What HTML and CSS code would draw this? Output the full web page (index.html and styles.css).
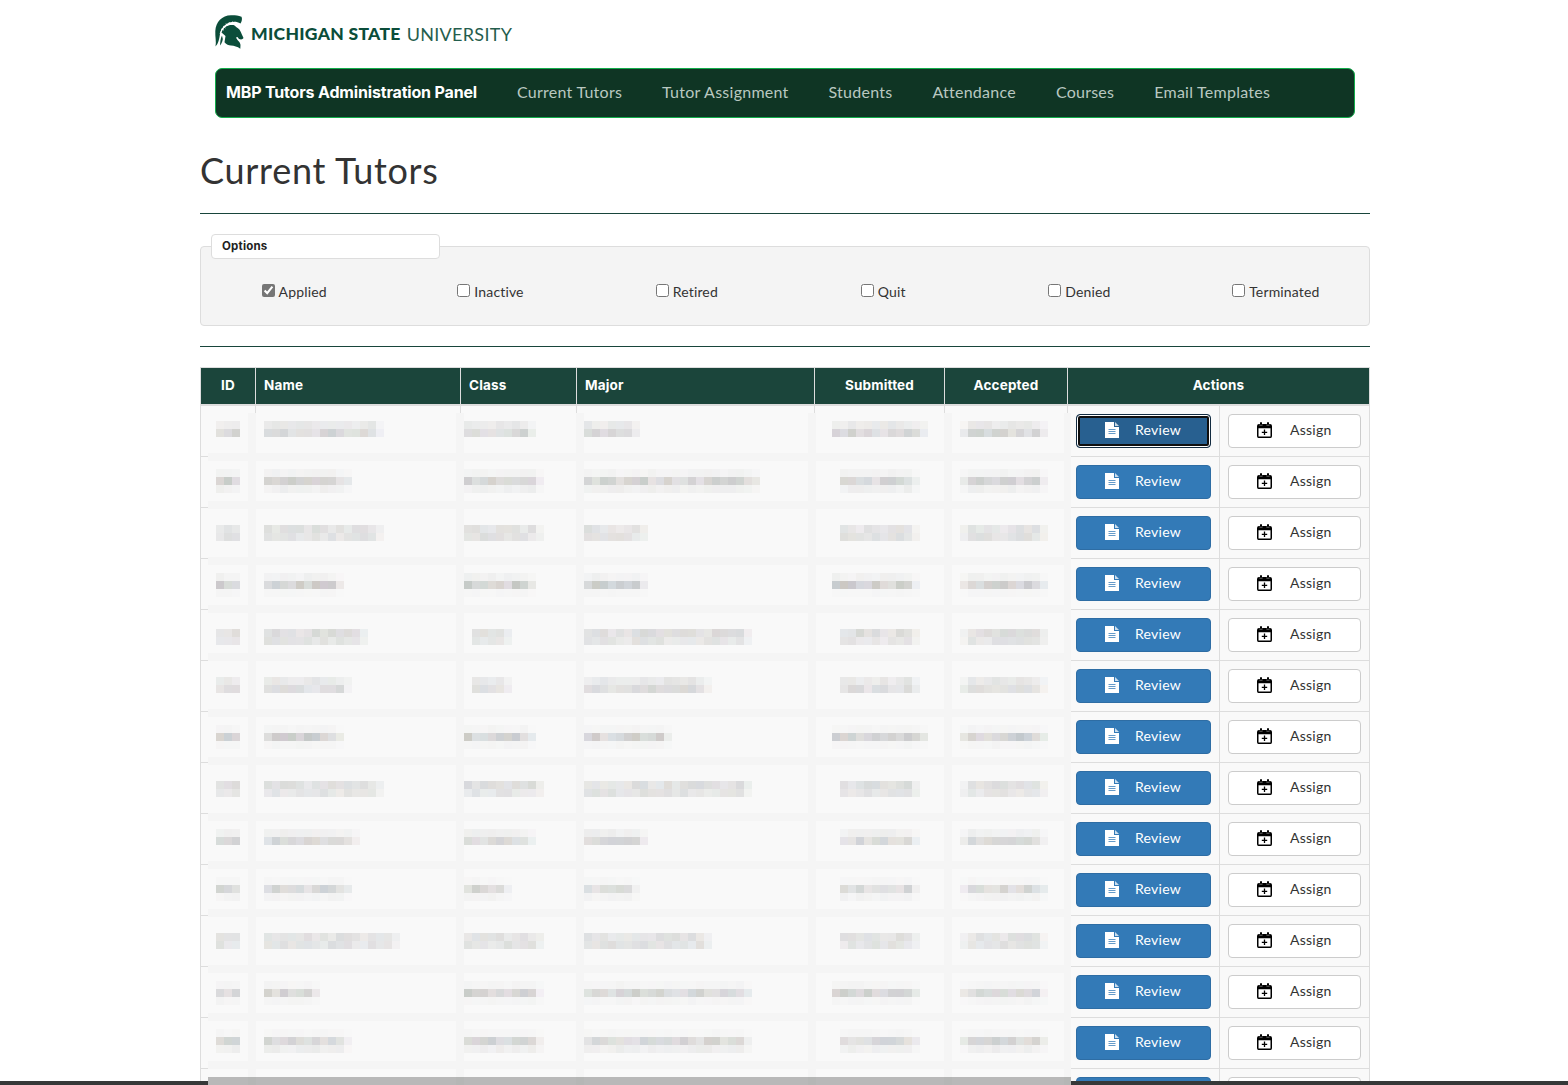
FILE: index.html
```
<!DOCTYPE html>
<html lang="en">
<head>
<meta charset="utf-8">
<title>Current Tutors</title>
<link rel="stylesheet" href="styles.css">
</head>
<body>
<svg class="defs" aria-hidden="true">
  <symbol id="file" viewBox="0 0 14 16">
    <path fill="#fff" d="M0 0h9v5h5v11H0z"/>
    <path fill="#fff" fill-opacity=".75" d="M10 0l4 4h-4z"/>
    <path stroke="#337ab7" stroke-opacity=".75" d="M3.5 7.5h7M3.5 9.5h7M3.5 11.5h7"/>
  </symbol>
  <symbol id="cal" viewBox="0 0 15 16">
    <path fill="#000" fill-rule="evenodd" d="M2 2h1V1.200Q3 0 4 0t1 1.200V2h5V1.200Q10 0 11 0t1 1.200V2h1q2 0 2 2v10q0 2-1.500 2h-12Q0 16 0 14V4q0-2 2-2zM1.500 6.200v8.300h12V6.200z"/>
    <path stroke="#fff" stroke-width=".5" stroke-opacity=".7" d="M2.700 2.500v.8h2.600v-.8M9.700 2.500v.8h2.600v-.8" fill="none"/>
    <path stroke="#000" stroke-width="1.300" d="M7.500 7.600v5.400M4.800 10.300h5.400"/>
  </symbol>
</svg>
<div class="container">
  <header class="brandbar">
    <svg class="helmet" viewBox="0 0 29 34" fill="#0b4d3a">
      <path d="M.5 31.500C1.500 27 0 22 .3 16 .8 7 7 .3 16 .2c4-.1 7 .3 10.500 1.500.9 1.800.5 4.500-1 6.800-3-1.800-6.500-2.300-10-1.200C9.500 9 6 13.500 5 19c-.8 5-1.500 9.500-4.500 12.500z"/>
      <path d="M6.500 17.500C8.500 12 13 9.300 18.500 10c2.200 1.200 2.700 2.200 4.500 3.200 2.500 1.800 3.200 5 5.500 9.800-.8 1.500-2.500 1.700-4.500 1l-1.500-2-1.500.5c1.200 3 4.500 4.500 4.500 7.500l-.2 3.800c-3-2.300-6-3-9.300-3.300-2.500-.2-4.500-.8-6.500-3.300l1-6.200z"/>
      <path d="M7 20.500l.8 3.500c-.3 2-.8 4-2.800 6.500.2-3.500.5-7 2-10z"/>
      <path d="M5 18.500Q8 9.500 18 7.600M6 14l3 1M8 11l2.500 2M11 8.500l2 2.500M14 7l1.500 3M17.500 6.500l.8 2.500" fill="none" stroke="#fff" stroke-width=".8"/>
    </svg>
    <span class="wordmark"><b>MICHIGAN STATE</b> <i>UNIVERSITY</i></span>
  </header>
  <nav class="nav">
    <a class="nav-brand">MBP Tutors Administration Panel</a>
    <a>Current Tutors</a><a>Tutor Assignment</a><a>Students</a><a>Attendance</a><a>Courses</a><a>Email Templates</a>
  </nav>
  <h1>Current Tutors</h1>
  <hr>
  <section class="options">
    <div class="legend">Options</div>
    <div class="checks">
      <label><input type="checkbox" checked><span>Applied</span></label>
      <label><input type="checkbox"><span>Inactive</span></label>
      <label><input type="checkbox"><span>Retired</span></label>
      <label><input type="checkbox"><span>Quit</span></label>
      <label><input type="checkbox"><span>Denied</span></label>
      <label><input type="checkbox"><span>Terminated</span></label>
    </div>
  </section>
  <hr class="second">
  <div class="table" id="table">
    <div class="row head">
      <div class="center">ID</div><div>Name</div><div>Class</div><div>Major</div><div class="center">Submitted</div><div class="center">Accepted</div><div class="center actions">Actions</div>
    </div>
  </div>
</div>
<div class="edge"></div>
<svg class="mosaic" id="mosaic" width="863" height="672" shape-rendering="crispEdges"></svg>
<script src="app.js"></script>
</body>
</html>
```
FILE: app.js
```
const table = document.getElementById('table');
for (let i = 0; i < 14; i++) {
  const row = document.createElement('div');
  const last = i === 13; // only the top edge of the last row's buttons is in view
  const face = (icon, w, text) => last ? '' : `<svg width="${w}" height="16"><use href="#${icon}"/></svg><span>${text}</span>`;
  row.className = 'row';
  row.innerHTML = '<div></div>'.repeat(6) +
    `<div><button class="btn review${i ? '' : ' focused'}">${face('file', 14, 'Review')}</button></div>` +
    `<div><button class="btn assign">${face('cal', 15, 'Assign')}</button></div>`;
  table.append(row);
}

// Pixelated privacy mask over the personal columns, in 8px cells.
// Each row: first cell row, strength of each band, then [from, to) cells per column.
const rows = [
  [1, [1, 2], [1, 4], [7, 22], [32, 41], [47, 54], [78, 90], [94, 105]],
  [7, [.4, 2.2, .6], [1, 4], [7, 18], [32, 42], [47, 69], [79, 89], [94, 105]],
  [14, [1.4, 1.4], [1, 4], [7, 22], [32, 42], [47, 55], [79, 89], [94, 105]],
  [20, [.5, 2.5, .2], [1, 4], [7, 17], [32, 41], [47, 55], [78, 89], [94, 105]],
  [27, [1.7, 1.3], [1, 4], [7, 20], [33, 38], [47, 68], [79, 89], [94, 105]],
  [33, [1.1, 1.7], [1, 4], [7, 18], [33, 38], [47, 63], [79, 89], [94, 105]],
  [39, [.3, 2.4, .3], [1, 4], [7, 17], [32, 41], [47, 58], [78, 90], [94, 105]],
  [46, [1.6, 1.3], [1, 4], [7, 22], [32, 42], [47, 68], [79, 89], [94, 105]],
  [52, [.6, 2, 0], [1, 4], [7, 19], [32, 41], [47, 55], [79, 89], [94, 105]],
  [58, [.2, 2, .4], [1, 4], [7, 18], [32, 38], [47, 54], [79, 89], [94, 105]],
  [65, [1.4, 1.4], [1, 4], [7, 24], [32, 42], [47, 63], [79, 89], [94, 105]],
  [71, [.3, 2.2, .3], [1, 4], [7, 14], [32, 42], [47, 68], [78, 89], [94, 105]],
  [77, [.2, 2.1, .7], [1, 4], [7, 18], [32, 42], [47, 68], [79, 89], [94, 105]]
];
let seed = 7;
const rand = () => (seed = (seed * 16807) % 2147483647) / 2147483647;
const cell = (x, y, w, h, fill) =>
  `<rect x="${x * 8}" y="${y * 8}" width="${w * 8}" height="${h * 8}" fill="${fill}"/>`;
let out = cell(0, 0, 108, 84, '#f9f9f9');
for (let i = 0; i < 13; i++) out += cell(0, Math.floor((43 + 51 * i) / 8), 108, 1, '#f5f5f5');
for (const c of [5, 31, 46, 75, 92, 107]) out += cell(c, 0, 1, 84, '#f5f5f5');
for (const [top, bands, ...cols] of rows) {
  bands.forEach((strength, b) => cols.forEach(([from, to]) => {
    for (let x = from; x < to; x++) {
      const edge = to - from > 3 && (x === to - 1 || (from > 90 && x === from)) ? .4 : 1;
      const v = 249 - strength * edge * (10 + rand() * 10);
      const tint = () => Math.round(Math.min(250, v + (rand() - .5) * 5 * strength));
      out += cell(x, top + b, 1, 1, `rgb(${tint()},${Math.round(v)},${tint()})`);
    }
  }));
}
out += cell(0, 83, 108, 1, '#b8b8b8');
for (const c of [5, 31, 46, 75, 92, 107]) out += cell(c, 83, 1, 1, '#b5b6b5');
document.getElementById('mosaic').innerHTML = out;
```
FILE: styles.css
```
* { box-sizing: border-box; }
html, body { height: 1085px; overflow: hidden; }
body { margin: 0; position: relative; background: #fff; color: #333; font: 14px/20px Lato, "Open Sans", sans-serif; letter-spacing: .25px; }
.defs { position: absolute; width: 0; height: 0; }
.container { width: 1170px; margin-left: 200px; }

.brandbar { height: 68px; padding: 15px 0 0 15px; display: flex; gap: 7px; color: #0b4d3a; }
.helmet { width: 29px; height: 34px; flex: none; }
.wordmark { padding-top: 8px; font-size: 18px; line-height: 22px; white-space: nowrap; display: flex; gap: 6px; }
.wordmark b { font-weight: 900; font-size: 17.5px; letter-spacing: .3px; }
.wordmark i { font-style: normal; font-weight: 400; letter-spacing: .3px; opacity: .9; }

.nav { height: 50px; margin: 0 15px; padding: 0 10px; border: 1px solid #12ad4b; border-radius: 7px; background: #0f3524; color: #b9c8c0; display: flex; gap: 40px; font-size: 16px; line-height: 46px; white-space: nowrap; }
.nav-brand { color: #fff; font-family: Inter, sans-serif; font-weight: 700; letter-spacing: -.17px; line-height: 47px; width: 251px; }

h1 { margin: 32px 0 0; height: 63px; font-size: 36px; line-height: 40px; font-weight: 400; letter-spacing: .72px; }
hr { margin: 0; border: 0; height: 1px; background: #18453b; }
.second { margin: 20px 0; }

.options { margin-top: 32px; height: 80px; border: 1px solid #ddd; border-radius: 4px; background: #f4f4f4; }
.legend { width: 229px; height: 25px; margin: -13px 0 0 10px; padding-left: 10px; border: 1px solid #ddd; border-radius: 4px; background: #fff; font: 700 11.5px/23px Inter, sans-serif; letter-spacing: .2px; color: #222; }
.checks { margin: 23px -5px 0; display: grid; grid-template-columns: repeat(6, 1fr); letter-spacing: .15px; }
.checks label { display: flex; justify-content: center; gap: 4px; }
.checks input { margin: 2px 0 0; width: 13px; height: 13px; accent-color: #767676; }

.table { border: 1px solid #ddd; border-width: 1px 0 0 1px; }
.row { height: 51px; display: grid; grid-template-columns: 55px 205px 116px 238px 130px 123px 152px 150px; background: #f9f9f9; }
.row > div { border-right: 1px solid #ddd; border-bottom: 1px solid #ddd; padding: 8px; }
.head { height: 38px; background: #1b453b; color: #fff; font: 700 13.5px/19px Inter, sans-serif; letter-spacing: .15px; }
.head > div { border-bottom-width: 2px; }
.center { text-align: center; }
.actions { grid-column: 7 / 9; }

.btn { width: 100%; height: 34px; padding: 0; border: 1px solid #ccc; border-radius: 4px; background: #fff; color: #333; font: inherit; letter-spacing: .25px; display: flex; align-items: flex-start; }
.btn svg { flex: none; margin: 7px 16px 0 28px; }
.btn span { line-height: 30px; }
.review { background: #337ab7; border-color: #2e6da4; color: #fff; }
.assign svg { margin-right: 18px; }
.focused { background: #286090; border-color: #122b40; box-shadow: inset 0 0 0 1px #fff, inset 0 0 0 3px #101010; }

.edge { position: absolute; left: 0; right: 0; bottom: 0; height: 4px; background: #363838; }
.mosaic { position: absolute; left: 208px; top: 413px; }
```
